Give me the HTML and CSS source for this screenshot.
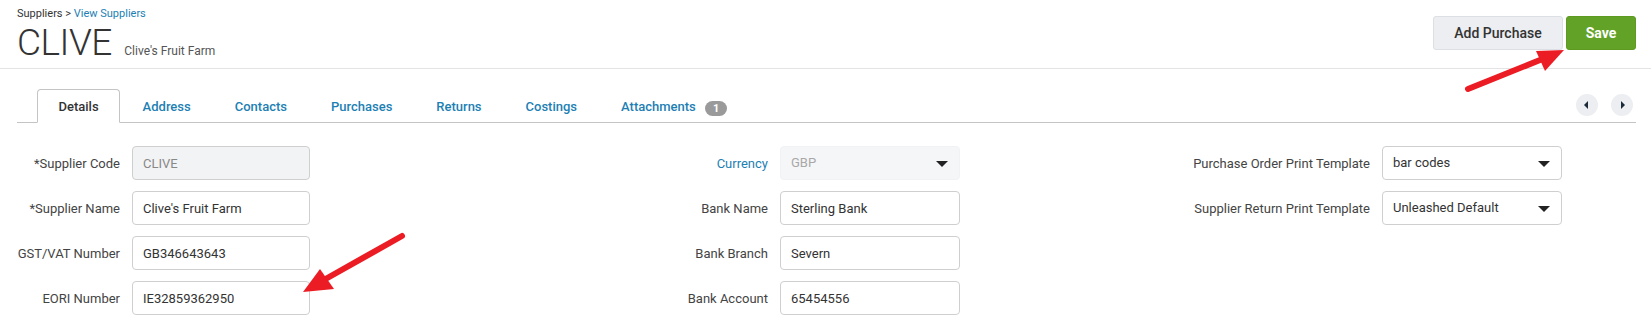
FILE: index.html
```html
<!DOCTYPE html>
<html lang="en">
<head>
    <meta charset="UTF-8">
    <meta name="viewport" content="width=device-width, initial-scale=1.0">
    <title>CLIVE - View Supplier</title>
    <link rel="stylesheet" href="styles.css">
</head>
<body>
    <header class="page-header">
        <div class="title-block">
            <div class="breadcrumb">Suppliers &gt; <a href="#">View Suppliers</a></div>
            <h1>CLIVE <small>Clive's Fruit Farm</small></h1>
        </div>
        <div class="actions">
            <button class="btn btn-default">Add Purchase</button>
            <button class="btn btn-save">Save</button>
        </div>
    </header>

    <nav class="tabs">
        <ul>
            <li class="active"><a href="#">Details</a></li>
            <li><a href="#">Address</a></li>
            <li><a href="#">Contacts</a></li>
            <li><a href="#">Purchases</a></li>
            <li><a href="#">Returns</a></li>
            <li><a href="#">Costings</a></li>
            <li><a href="#">Attachments <span class="badge">1</span></a></li>
        </ul>
        <div class="scroller">
            <span class="circle prev"></span>
            <span class="circle next"></span>
        </div>
    </nav>

    <form class="details">
        <div class="col col-a">
            <div class="field">
                <label>*Supplier Code</label>
                <input type="text" value="CLIVE" disabled>
            </div>
            <div class="field">
                <label>*Supplier Name</label>
                <input type="text" value="Clive's Fruit Farm">
            </div>
            <div class="field">
                <label>GST/VAT Number</label>
                <input type="text" value="GB346643643">
            </div>
            <div class="field">
                <label>EORI Number</label>
                <input type="text" value="IE32859362950">
            </div>
        </div>
        <div class="col col-b">
            <div class="field">
                <label class="link">Currency</label>
                <div class="select disabled">GBP</div>
            </div>
            <div class="field">
                <label>Bank Name</label>
                <input type="text" value="Sterling Bank">
            </div>
            <div class="field">
                <label>Bank Branch</label>
                <input type="text" value="Severn">
            </div>
            <div class="field">
                <label>Bank Account</label>
                <input type="text" value="65454556">
            </div>
        </div>
        <div class="col col-c">
            <div class="field">
                <label>Purchase Order Print Template</label>
                <div class="select">bar codes</div>
            </div>
            <div class="field">
                <label>Supplier Return Print Template</label>
                <div class="select">Unleashed Default</div>
            </div>
        </div>
    </form>

    <!-- annotation arrows -->
    <svg class="annotations" width="1651" height="322" viewBox="0 0 1651 322">
        <g stroke="#ec1c24" stroke-width="6" stroke-linecap="round" fill="#ec1c24">
            <line x1="1468" y1="89" x2="1540" y2="60"/>
            <line x1="402" y1="236" x2="322" y2="281"/>
        </g>
        <g fill="#ec1c24">
            <polygon points="1564,50 1536,51 1545,71"/>
            <polygon points="303,292 320,269 334,289"/>
        </g>
    </svg>
</body>
</html>
```

FILE: styles.css
```css
body {
    margin: 0;
    font-family: Roboto, "Liberation Sans", Arial, sans-serif;
    color: #333;
    background: #fff;
    position: relative;
    width: 1651px;
    height: 322px;
    overflow: hidden;
}

a {
    color: #1d7fb4;
    text-decoration: none;
}

.page-header {
    display: flex;
    justify-content: space-between;
    align-items: flex-start;
    height: 68px;
    padding: 0 15px 0 17px;
    border-bottom: 1px solid #e3e3e3;
}

.breadcrumb {
    font-size: 11px;
    line-height: 13px;
    padding-top: 7px;
    color: #333;
}

h1 {
    margin: 4px 0 0;
    font-size: 37px;
    font-weight: 300;
    line-height: 38px;
    letter-spacing: -0.5px;
    color: #333;
}

h1 small {
    font-size: 12px;
    font-weight: 400;
    letter-spacing: 0;
    color: #555;
    margin-left: 4px;
}

.actions {
    display: flex;
    gap: 3px;
    margin-top: 16px;
}

.btn {
    height: 34px;
    border-radius: 3px;
    font-family: inherit;
    font-size: 14px;
    cursor: pointer;
}

.btn-default {
    width: 130px;
    background: #eceef1;
    border: 1px solid #dcdfe3;
    color: #333;
    font-weight: 500;
}

.btn-save {
    width: 70px;
    background: #62a227;
    border: 1px solid #5c9a22;
    color: #fff;
    font-weight: 700;
}

.tabs {
    display: flex;
    justify-content: space-between;
    align-items: flex-end;
    margin: 20px 15px 0 17px;
    border-bottom: 1px solid #c4c4c4;
}

.tabs ul {
    display: flex;
    gap: 1px;
    list-style: none;
    margin: 0 0 -1px 20px;
    padding: 0;
}

.tabs li a {
    display: block;
    height: 33px;
    line-height: 33px;
    padding: 0 20.5px;
    font-size: 13px;
    font-weight: 500;
    border: 1px solid transparent;
    border-bottom: none;
    border-radius: 4px 4px 0 0;
}

.tabs li.active a {
    color: #333;
    background: #fff;
    border-color: #c4c4c4;
    border-bottom: 1px solid #fff;
    height: 32px;
}

.badge {
    display: inline-block;
    min-width: 22px;
    height: 15px;
    line-height: 15px;
    margin-left: 6px;
    border-radius: 8px;
    background: #9a9a9a;
    color: #fff;
    font-size: 11px;
    font-weight: 700;
    text-align: center;
    vertical-align: -1px;
}

.scroller {
    display: flex;
    gap: 13px;
    padding: 0 3px 6px 0;
}

.circle {
    position: relative;
    width: 22px;
    height: 22px;
    border-radius: 50%;
    background: #eceef1;
}

.circle::after {
    content: "";
    position: absolute;
    top: 7px;
    border-top: 4px solid transparent;
    border-bottom: 4px solid transparent;
}

.prev::after {
    left: 8px;
    border-right: 4px solid #1b2a3a;
}

.next::after {
    left: 10px;
    border-left: 4px solid #1b2a3a;
}

.details {
    display: flex;
    padding: 23px 0 0 17px;
}

.col {
    display: flex;
    flex-direction: column;
    gap: 11px;
}

.field {
    display: flex;
    align-items: center;
    gap: 12px;
}

.field label {
    text-align: right;
    font-size: 13px;
    color: #444;
}

.field label.link {
    color: #1d7fb4;
}

.col-a label { width: 103px; }
.col-a { width: 551px; }
.col-b label { width: 200px; }
.col-b { width: 570px; }
.col-c label { width: 232px; }

.field input,
.select {
    box-sizing: border-box;
    width: 180px;
    height: 34px;
    padding: 0 10px;
    border: 1px solid #cfcfcf;
    border-radius: 4px;
    font-family: inherit;
    font-size: 13px;
    color: #333;
    background: #fff;
}

.col-a .field input {
    width: 178px;
}

.field input:disabled {
    background: #f2f3f5;
    color: #888;
}

.select {
    position: relative;
    line-height: 31px;
}

.select::after {
    content: "";
    position: absolute;
    right: 11px;
    top: 14px;
    border-left: 6px solid transparent;
    border-right: 6px solid transparent;
    border-top: 6px solid #222;
}

.select.disabled {
    background: #f5f6f8;
    border-color: #f1f2f4;
    color: #a8a8a8;
}

.annotations {
    position: absolute;
    top: 0;
    left: 0;
    pointer-events: none;
}
```
